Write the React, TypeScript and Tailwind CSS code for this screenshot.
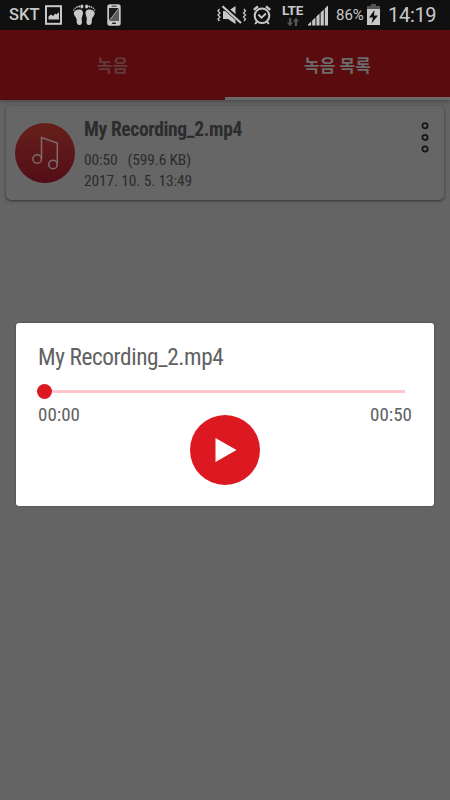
import { clsx } from "clsx"

const recording = {
  name: "My Recording_2.mp4",
  duration: "00:50",
  size: "(599.6 KB)",
  date: "2017. 10. 5. 13:49",
}

const tabs = [
  { label: "녹음", active: false },
  { label: "녹음 목록", active: true },
]

function Foot() {
  return (
    <>
      <path d="M.9 8.500C1.500 6.300 4.500 5 7.300 5.600c2.600.6 3.100 2.800 2.500 5-.6 2.200-1.500 3.600-1 5.600.7 3-.2 4.900-2.300 4.900-2.200 0-3-1.800-2.800-4.300.1-1.900-.7-3.200-1.700-4.600C1 11 .6 9.700.9 8.500z" />
      <ellipse cx="8.900" cy="2.500" rx="1.500" ry="2" />
      <circle cx="6.200" cy="2.500" r="1" />
      <circle cx="4" cy="3.100" r=".9" />
      <circle cx="2.100" cy="4.300" r=".8" />
      <circle cx=".8" cy="6" r=".7" />
    </>
  )
}

function StatusBar() {
  return (
    <div className="flex h-[30px] shrink-0 items-center bg-[#101010] text-[#c8c8c8]">
      <span className="ml-[9px] w-[30px] whitespace-nowrap text-[16.500px] leading-none font-medium">SKT</span>

      {/* Screenshot */}
      <svg className="ml-[6px] shrink-0" width="17" height="20" viewBox="0 0 17 20">
        <rect x="1" y="1.200" width="15" height="17.600" fill="none" stroke="currentColor" strokeWidth="2" />
        <path d="M3.500 14.500V11.500l2.500-2 2 1.500 2.500-2.500 1 1L14 7v7.500z" fill="currentColor" />
      </svg>

      {/* Pedometer */}
      <svg className="ml-[11px] shrink-0" width="23" height="22" viewBox="0 0 23 22" fill="currentColor">
        <Foot />
        <g transform="translate(22.500 0) scale(-1 1)">
          <Foot />
        </g>
      </svg>

      {/* Phone */}
      <svg className="ml-[11px] shrink-0" width="14" height="22" viewBox="0 0 14 22">
        <rect x=".3" y=".3" width="13.400" height="21.400" rx="2.500" fill="currentColor" />
        <rect x="2" y="4" width="10" height="13" fill="#1c1c1c" />
        <path d="M12 4v13H2z" fill="#5c5c5c" />
        <path d="M2 17 12 4" stroke="currentColor" strokeWidth=".8" />
        <rect x="4.500" y="1.700" width="5" height="1" fill="#333" />
        <rect x="5" y="18.500" width="4" height="1.500" rx=".7" fill="#222" />
      </svg>

      {/* Muted speaker */}
      <svg className="ml-auto shrink-0" width="30" height="20" viewBox="0 0 30 20">
        <path d="M6 6h5l7.500-5v18L11 14H6z" fill="currentColor" />
        <path d="M6.500 1.500 24.500 17.500" stroke="#101010" strokeWidth="4.500" />
        <path d="M5.500 1.200 24 18" stroke="currentColor" strokeWidth="2.200" />
        <path d="M2.500 4 1 6l2 2-2 2 2 2-2 2 1.500 2M27 4l1.500 2-2 2 2 2-2 2 2 2-1.500 2" fill="none" stroke="currentColor" strokeWidth="1.300" />
      </svg>

      {/* Alarm */}
      <svg className="ml-[6px] shrink-0" width="18" height="20" viewBox="0 0 18 20" fill="none" stroke="currentColor">
        <circle cx="9" cy="10.800" r="7.300" strokeWidth="2" />
        <path d="M5.300 9.500 8.500 12.700 13 8.500" strokeWidth="1.800" />
        <path d="M.8 4.800 5 1.300M17.200 4.800 13 1.300" strokeWidth="2.400" />
        <path d="m4 16.500-1.800 2.500M14 16.500l1.800 2.500" strokeWidth="2" />
      </svg>

      {/* Network type */}
      <div className="ml-[11px] flex w-[21px] shrink-0 flex-col items-center">
        <span className="text-[13.500px] leading-[13px] font-bold tracking-[-0.3px]">LTE</span>
        <svg width="12" height="10" viewBox="0 0 12 10" fill="#575757">
          <path d="M2 1h2.200v4.500H6L3 9.500 0 5.500h2zM7.800 9H10V4.500h2L9 .5 6 4.500h1.800z" />
        </svg>
      </div>

      {/* Signal */}
      <svg className="ml-[5px] shrink-0" width="20" height="21" viewBox="0 0 20 20" fill="currentColor">
        <path d="M0 20v-1l3.200-3V20zM4.200 20v-5L7.400 12V20zM8.400 20v-9l3.200-3V20zM12.600 20V7l3.200-3V20zM16.800 20V3L20 0V20z" />
      </svg>

      <span className="ml-2 w-[28px] whitespace-nowrap text-[15px] leading-none">86%</span>

      {/* Battery */}
      <svg className="mb-px ml-[3px] shrink-0" width="13" height="21" viewBox="0 0 13 21">
        <rect x="4" y="0" width="5" height="3" fill="#555" />
        <rect x="0" y="2" width="13" height="3" fill="#555" />
        <rect x="0" y="5" width="13" height="16" fill="currentColor" />
        <path d="M7.500 6 2 13.500h4L4.500 19.500 11 11.500H7z" fill="#101010" />
      </svg>

      <span className="mr-[13px] ml-2 w-[49px] whitespace-nowrap text-[20px] leading-none tracking-[-0.3px]">14:19</span>
    </div>
  )
}

function TabBar() {
  return (
    <div className="z-10 flex h-[70px] shrink-0 bg-[#5a0b0d] shadow-[0_1px_5px_rgba(0,0,0,0.35)]">
      {tabs.map(tab => (
        <button
          key={tab.label}
          className={clsx(
            "flex flex-1 items-center justify-center border-b-[3px] pt-[7px] text-[17px] font-bold",
            tab.active ? "border-[#6a6a6a] text-[#6b6b6b]" : "border-transparent text-[#613b3c]"
          )}
        >
          {tab.label}
        </button>
      ))}
    </div>
  )
}

function RecordingCard() {
  return (
    <div className="mx-[6px] mt-[6px] flex h-[94px] rounded-[5px] bg-[#666] shadow-[0_1px_3px_rgba(0,0,0,0.5)]">
      <svg className="mt-[17px] ml-[9px] shrink-0" width="60" height="60" viewBox="0 0 60 60" fill="none">
        <defs>
          <linearGradient id="disc" x1="0" y1="0" x2="0" y2="1">
            <stop offset="0" stopColor="#66201a" />
            <stop offset="1" stopColor="#540d17" />
          </linearGradient>
        </defs>
        <circle cx="30" cy="30" r="30" fill="url(#disc)" />
        <g stroke="#7c6c6d" strokeWidth="1.500">
          <circle cx="22.200" cy="36" r="4.300" />
          <circle cx="38" cy="41.500" r="4.300" />
          <path d="M26.500 36V14.500L42.300 20v21.500" />
        </g>
      </svg>
      <div className="ml-[9px] flex-1 whitespace-nowrap text-[#2c2c2c] font-['Roboto_Condensed',Roboto,sans-serif]">
        <p className="mt-3 text-[19.500px] leading-6 font-bold tracking-[-0.35px]">{recording.name}</p>
        <p className="mt-2 text-[15.500px] leading-[21px] tracking-[-0.15px]">
          {recording.duration}
          <span className="ml-[10px]">{recording.size}</span>
        </p>
        <p className="text-[15.500px] leading-5 tracking-[-0.15px]">{recording.date}</p>
      </div>
      <svg className="mt-4 mr-[15px]" width="8" height="32" viewBox="0 0 8 32" fill="none" stroke="#161616" strokeWidth="1.800">
        <circle cx="4" cy="3.700" r="2.600" />
        <circle cx="4" cy="15.400" r="2.600" />
        <circle cx="4" cy="27" r="2.600" />
      </svg>
    </div>
  )
}

function PlayerDialog() {
  return (
    <div className="absolute top-[323px] left-4 flex h-[183px] w-[418px] flex-col rounded-[3px] bg-white text-[#616161] shadow-[0_0_2px_rgba(0,0,0,0.4)]">
      <h2 className="mt-5 ml-[22px] text-[23.300px] leading-7 tracking-[-0.4px] whitespace-nowrap font-['Roboto_Condensed',Roboto,sans-serif]">
        {recording.name}
      </h2>
      <div className="mt-[13px] ml-[21px] flex h-[15px] w-[368px] items-center">
        <span className="size-[15px] rounded-full bg-[#dc1920]" />
        <span className="h-[3px] flex-1 bg-[#ffc7cb]" />
      </div>
      <div className="mt-1 flex justify-between px-[22px] text-[19px] leading-6 font-['Roboto_Condensed',Roboto,sans-serif]">
        <span>00:00</span>
        <span>{recording.duration}</span>
      </div>
      <button className="-mt-3 size-[70px] self-center rounded-full bg-[#dc1920]">
        <svg width="70" height="70" viewBox="0 0 70 70" fill="#fff">
          <path d="M25.500 23 46.500 35 25.500 47z" />
        </svg>
      </button>
    </div>
  )
}

export default function App() {
  return (
    <div className="relative flex h-[800px] w-[450px] flex-col overflow-hidden bg-[#646464] font-[Roboto,'Noto_Sans_CJK_KR',sans-serif]">
      <StatusBar />
      <TabBar />
      <RecordingCard />
      <PlayerDialog />
    </div>
  )
}
